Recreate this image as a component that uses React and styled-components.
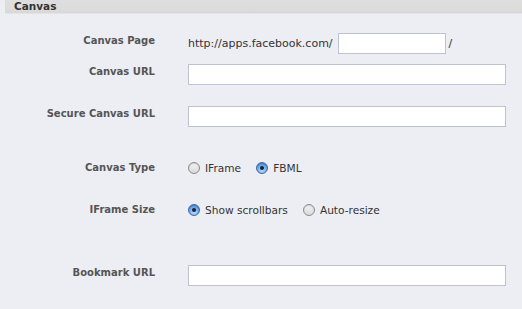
import React from 'react';
import styled, { createGlobalStyle } from 'styled-components';

const GlobalStyle = createGlobalStyle`
  html, body {
    margin: 0;
    padding: 0;
    background: #edeef3;
  }
  body {
    font-family: "DejaVu Sans", Verdana, sans-serif;
    font-size: 11px;
    color: #333;
  }
`;

const Page = styled.div`
  width: 522px;
  height: 309px;
  overflow: hidden;
  background: #edeef3;
`;

const Header = styled.div`
  margin-left: 5px;
  height: 13px;
  padding-left: 9px;
  background: linear-gradient(#dedede 0, #dcdcdc 9px, #d7d7d7 13px);
  border-bottom: 1px solid #e4e4e6;
  font-weight: bold;
  font-size: 10.5px;
  line-height: 12px;
  color: #333;
`;

const Form = styled.div`
  padding-top: 19px;
`;

const Row = styled.div`
  display: grid;
  grid-template-columns: 155px 1fr;
  column-gap: 33px;
  align-items: ${p => (p.$center ? 'center' : 'start')};
  height: 21px;
  margin-top: ${p => p.$top || 0}px;
`;

const Label = styled.div`
  text-align: right;
  font-weight: bold;
  font-size: 10px;
  color: #555;
  line-height: 14px;
  padding-top: ${p => (p.$center ? 0 : 1)}px;
  white-space: nowrap;
`;

const Field = styled.div`
  display: flex;
  align-items: center;
  height: 21px;
  white-space: nowrap;
`;

const Prefix = styled.span`
  margin-right: 5px;
  color: #333;
`;

const Suffix = styled.span`
  margin-left: 3px;
  color: #333;
`;

const TextInput = styled.div`
  box-sizing: border-box;
  width: ${p => p.$width || 318}px;
  height: 21px;
  background: #fff;
  border: 1px solid #bcc2d2;
`;

const Option = styled.label`
  display: flex;
  align-items: center;
  margin-right: 15px;
  font-size: 10.6px;
  color: #333;
`;

const Radio = styled.span`
  position: relative;
  box-sizing: border-box;
  width: 12px;
  height: 12px;
  border-radius: 50%;
  margin-right: 5px;
  border: 1px solid ${p => (p.$checked ? '#3b6aa6' : '#8c8c8c')};
  background: ${p =>
    p.$checked
      ? 'radial-gradient(circle at 50% 75%, #b9dcfb 0, #6fa8e6 55%, #3f7fd0 100%)'
      : 'linear-gradient(#f4f4f4, #d9d9d9)'};
  box-shadow: inset 0 1px 1px rgba(0, 0, 0, 0.15);

  &::after {
    content: '';
    display: ${p => (p.$checked ? 'block' : 'none')};
    position: absolute;
    left: 3px;
    top: 3px;
    width: 4px;
    height: 4px;
    border-radius: 50%;
    background: #14233a;
  }
`;

const RadioGroup = ({ options }) => (
  <Field>
    {options.map(o => (
      <Option key={o.label}>
        <Radio $checked={o.checked} />
        {o.label}
      </Option>
    ))}
  </Field>
);

const App = () => (
  <Page>
    <GlobalStyle />
    <Header>Canvas</Header>
    <Form>
      <Row>
        <Label>Canvas Page</Label>
        <Field>
          <Prefix>http://apps.facebook.com/</Prefix>
          <TextInput $width={108} />
          <Suffix>/</Suffix>
        </Field>
      </Row>
      <Row $top={10}>
        <Label>Canvas URL</Label>
        <Field>
          <TextInput />
        </Field>
      </Row>
      <Row $top={21}>
        <Label>Secure Canvas URL</Label>
        <Field>
          <TextInput />
        </Field>
      </Row>
      <Row $top={30} $center>
        <Label $center>Canvas Type</Label>
        <RadioGroup
          options={[
            { label: 'IFrame', checked: false },
            { label: 'FBML', checked: true },
          ]}
        />
      </Row>
      <Row $top={21} $center>
        <Label $center>IFrame Size</Label>
        <RadioGroup
          options={[
            { label: 'Show scrollbars', checked: true },
            { label: 'Auto-resize', checked: false },
          ]}
        />
      </Row>
      <Row $top={45}>
        <Label>Bookmark URL</Label>
        <Field>
          <TextInput />
        </Field>
      </Row>
    </Form>
  </Page>
);

export default App;
